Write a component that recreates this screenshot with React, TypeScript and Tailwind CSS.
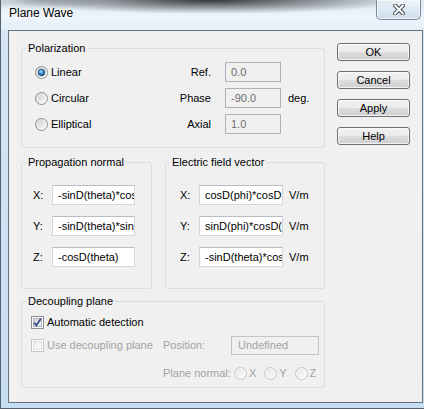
import React, { useId } from "react";

function Radio({ checked = false, disabled = false }: { checked?: boolean; disabled?: boolean }) {
  const id = useId().replace(/[^a-zA-Z0-9]/g, "");
  return (
    <svg width="13" height="13" viewBox="0 0 13 13" className="shrink-0">
      <defs>
        <linearGradient id={`g${id}`} x1="0" y1="0" x2="1" y2="1">
          <stop offset="0" stopColor={disabled ? "#e4e4e4" : "#c9c9c9"} />
          <stop offset="1" stopColor={disabled ? "#fbfbfb" : "#ffffff"} />
        </linearGradient>
        <radialGradient id={`d${id}`} cx="0.4" cy="0.35" r="0.75">
          <stop offset="0" stopColor="#a6dcff" />
          <stop offset="0.45" stopColor="#3d8bd0" />
          <stop offset="1" stopColor="#163f6c" />
        </radialGradient>
      </defs>
      <circle cx="6.5" cy="6.5" r="6" fill={`url(#g${id})`} stroke={disabled ? "#c6c6c6" : "#8e8f8f"} />
      <circle cx="6.5" cy="6.5" r="4.6" fill="none" stroke="#ffffff" strokeOpacity="0.5" />
      {checked && <circle cx="6.5" cy="6.5" r="3.4" fill={`url(#d${id})`} stroke="#1b3c62" strokeWidth="0.6" />}
    </svg>
  );
}

function Check({ checked = false, disabled = false }: { checked?: boolean; disabled?: boolean }) {
  const id = useId().replace(/[^a-zA-Z0-9]/g, "");
  return (
    <svg width="13" height="13" viewBox="0 0 13 13" className="shrink-0">
      <defs>
        <linearGradient id={`c${id}`} x1="0" y1="0" x2="1" y2="1">
          <stop offset="0" stopColor={disabled ? "#ececec" : "#cbcfd5"} />
          <stop offset="1" stopColor={disabled ? "#fafafa" : "#f6f6f6"} />
        </linearGradient>
      </defs>
      <rect x="0.5" y="0.5" width="12" height="12" fill="#ffffff" stroke={disabled ? "#c6c6c6" : "#8e8f8f"} />
      <rect x="2.5" y="2.5" width="8" height="8" fill={`url(#c${id})`} stroke={disabled ? "#dedede" : "#b3b8bf"} />
      {checked && (
        <path d="M3.2 6.6 L5.4 9.4 L9.9 2.6" stroke="#3c4f8e" strokeWidth="1.8" fill="none" strokeLinejoin="miter" />
      )}
    </svg>
  );
}

function Field({ text, w, disabled = false }: { text: string; w: string; disabled?: boolean }) {
  return (
    <div
      className={
        disabled
          ? `${w} h-[20px] shrink-0 border border-[#b1b1b1] bg-[#f0f0f0] text-[#6d6d6d] pl-[5px] leading-[18px] whitespace-nowrap overflow-hidden`
          : `${w} h-[20px] shrink-0 border border-[#d3d8de] border-t-[#b9bcc2] bg-white text-black pl-[5px] leading-[18px] whitespace-nowrap overflow-hidden`
      }
    >
      {text}
    </div>
  );
}

function Btn({ label }: { label: string }) {
  return (
    <div className="h-[18px] w-[73px] rounded-[3px] border border-[#707070] bg-[linear-gradient(180deg,#f2f2f2_0%,#ebebeb_48%,#dddddd_52%,#cfcfcf_100%)] shadow-[inset_0_0_0_1px_rgba(255,255,255,0.7)] flex items-center justify-center leading-[14px]">
      {label}
    </div>
  );
}

function Legend({ children }: { children: React.ReactNode }) {
  return <legend className="ml-[4px] px-[2px] leading-[13px]">{children}</legend>;
}

export default function App() {
  return (
    <div className="w-[424px] h-[409px] overflow-hidden flex flex-col border-l border-b border-[#56616d] bg-[linear-gradient(180deg,#d6e6f5,#c7ddf2)] font-['Liberation_Sans',Arial,sans-serif] text-[11px] text-black">
      {/* title bar */}
      <div className="h-[30px] shrink-0 flex items-start bg-[radial-gradient(ellipse_200px_14px_at_210px_0px,rgba(35,35,35,0.9),rgba(35,35,35,0)),radial-gradient(ellipse_70px_10px_at_40px_0px,rgba(80,80,80,0.35),rgba(80,80,80,0)),linear-gradient(180deg,#dfeaf5,#eef5fb_60%,#e2eef9)]">
        <div className="pl-[8px] pt-[6px] text-[12px] leading-[15px] [text-shadow:0_0_6px_#ffffff,0_0_3px_#ffffff]">
          Plane Wave
        </div>
        <div className="ml-auto mr-[3px] w-[45px] h-[20px] rounded-b-[5px] border border-t-0 border-[#7a8898] bg-[linear-gradient(180deg,rgba(255,255,255,0.55),rgba(215,228,240,0.6)_50%,rgba(190,210,230,0.7))] shadow-[inset_0_0_0_1px_rgba(255,255,255,0.6)] flex items-center justify-center">
          <svg width="12" height="11" viewBox="0 0 12 11">
            <path d="M2 1.5 L10 9.5 M10 1.5 L2 9.5" stroke="#3f4650" strokeWidth="4" strokeLinecap="square" />
            <path d="M2 1.5 L10 9.5 M10 1.5 L2 9.5" stroke="#ffffff" strokeWidth="2" strokeLinecap="square" />
          </svg>
        </div>
      </div>

      {/* client area */}
      <div className="ml-[7px] mr-[1px] h-[373px] shrink-0 border border-[#65727f] bg-[#f0f0f0] flex pl-[12px]">
        <div className="w-[304px] shrink-0 pt-[11px] flex flex-col">
          {/* Polarization */}
          <fieldset className="border border-[#d5dfe5] rounded-[3px]">
            <Legend>Polarization</Legend>
            <div className="pl-[13px] pt-[7px] pb-[13px] flex flex-col gap-[6px]">
              {[
                { l: "Linear", c: true, k: "Ref.", v: "0.0", u: "" },
                { l: "Circular", c: false, k: "Phase", v: "-90.0", u: "deg." },
                { l: "Elliptical", c: false, k: "Axial", v: "1.0", u: "" },
              ].map((r) => (
                <div key={r.l} className="h-[20px] flex items-center">
                  <div className="w-[120px] flex items-center gap-[3px]">
                    <Radio checked={r.c} />
                    <span>{r.l}</span>
                  </div>
                  <div className="w-[56px] text-right">{r.k}</div>
                  <div className="ml-[14px]">
                    <Field text={r.v} w="w-[56px]" disabled />
                  </div>
                  <span className="ml-[7px]">{r.u}</span>
                </div>
              ))}
            </div>
          </fieldset>

          <div className="mt-[8px] flex gap-[13px]">
            <fieldset className="w-[131px] border border-[#d5dfe5] rounded-[3px]">
              <Legend>Propagation normal</Legend>
              <div className="pl-[11px] pt-[16px] pb-[21px] flex flex-col gap-[11px]">
                {[
                  ["X:", "-sinD(theta)*cosD(phi)"],
                  ["Y:", "-sinD(theta)*sinD(phi)"],
                  ["Z:", "-cosD(theta)"],
                ].map(([a, b]) => (
                  <div key={a} className="h-[20px] flex items-center">
                    <span className="w-[19px]">{a}</span>
                    <Field text={b} w="w-[83px]" />
                  </div>
                ))}
              </div>
            </fieldset>
            <fieldset className="w-[160px] border border-[#d5dfe5] rounded-[3px]">
              <Legend>Electric field vector</Legend>
              <div className="pl-[14px] pt-[16px] pb-[21px] flex flex-col gap-[11px]">
                {[
                  ["X:", "cosD(phi)*cosD(theta)"],
                  ["Y:", "sinD(phi)*cosD(theta)"],
                  ["Z:", "-sinD(theta)*cosD(phi)"],
                ].map(([a, b]) => (
                  <div key={a} className="h-[20px] flex items-center">
                    <span className="w-[19px]">{a}</span>
                    <Field text={b} w="w-[84px]" />
                    <span className="ml-[6px]">V/m</span>
                  </div>
                ))}
              </div>
            </fieldset>
          </div>

          {/* Decoupling */}
          <fieldset className="mt-[6px] border border-[#d5dfe5] rounded-[3px]">
            <Legend>Decoupling plane</Legend>
            <div className="pl-[9px] pt-[5px] pb-[6px] flex flex-col">
              <div className="h-[18px] flex items-center gap-[3px]">
                <Check checked />
                <span>Automatic detection</span>
              </div>
              <div className="mt-[5px] h-[19px] flex items-center text-[#a3a3a3]">
                <div className="w-[132px] flex items-center gap-[3px]">
                  <Check disabled />
                  <span>Use decoupling plane</span>
                </div>
                <div className="w-[68px]">Position:</div>
                <div className="w-[88px] h-[19px] border border-[#c4c4c4] pl-[6px] leading-[17px]">Undefined</div>
              </div>
              <div className="mt-[10px] h-[16px] flex items-center text-[#a3a3a3] pl-[132px]">
                <span>Plane normal:</span>
                <span className="ml-[3px]"><Radio disabled /></span>
                <span className="ml-[2px]">X</span>
                <span className="ml-[8px]"><Radio disabled /></span>
                <span className="ml-[2px]">Y</span>
                <span className="ml-[8px]"><Radio disabled /></span>
                <span className="ml-[2px]">Z</span>
              </div>
            </div>
          </fieldset>
        </div>

        <div className="ml-[12px] pt-[12px] flex flex-col gap-[10px]">
          <Btn label="OK" />
          <Btn label="Cancel" />
          <Btn label="Apply" />
          <Btn label="Help" />
        </div>
      </div>
    </div>
  );
}
